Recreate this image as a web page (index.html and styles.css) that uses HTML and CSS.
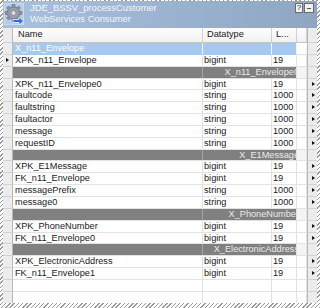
FILE: index.html
```html
<!DOCTYPE html>
<html lang="en">
<head>
    <meta charset="UTF-8">
    <title>JDE_BSSV_processCustomer</title>
    <link rel="stylesheet" href="styles.css">
</head>
<body>
    <div class="designer">
        <div class="titlebar">
            <div class="icon">
                <svg width="20" height="22" viewBox="0 0 20 22">
                    <rect x="0.5" y="0.5" width="19" height="21" fill="#b9cde6" stroke="#c9d8ec"/>
                    <g transform="translate(9.5 10)">
                        <circle r="6.2" fill="#8d93a3" stroke="#6a7183" stroke-width="0.8"/>
                        <g fill="#8d93a3" stroke="#6a7183" stroke-width="0.6">
                            <rect x="-1.5" y="-8.4" width="3" height="3"/>
                            <rect x="-1.5" y="5.4" width="3" height="3"/>
                            <rect x="-8.4" y="-1.5" width="3" height="3"/>
                            <rect x="5.4" y="-1.5" width="3" height="3"/>
                            <rect x="-1.5" y="-8.4" width="3" height="3" transform="rotate(45)"/>
                            <rect x="-1.5" y="5.4" width="3" height="3" transform="rotate(45)"/>
                            <rect x="-8.4" y="-1.5" width="3" height="3" transform="rotate(45)"/>
                            <rect x="5.4" y="-1.5" width="3" height="3" transform="rotate(45)"/>
                        </g>
                        <circle r="5.4" fill="#9aa0ae"/>
                        <circle r="2.6" fill="#d7dae2" stroke="#70778a" stroke-width="0.7"/>
                    </g>
                    <path d="M9 16.5h6v-2.5l4.5 4-4.5 4v-2.5h-6z" fill="#2d6fd8" stroke="#e8f0fb" stroke-width="0.8"/>
                </svg>
            </div>
            <div class="title">
                <div>JDE_BSSV_processCustomer</div>
                <div>WebServices Consumer</div>
            </div>
            <div class="title-buttons">
                <span class="tbtn help">?</span>
                <span class="tbtn min">&ndash;</span>
            </div>
        </div>

        <div class="grid">
            <div class="row header">
                <div class="gutter"></div>
                <div class="hcell name-col">Name</div>
                <div class="hcell">Datatype</div>
                <div class="hcell">L...</div>
                <div class="hcell"></div>
                <div class="gutter right"></div>
            </div>

            <div class="row selected">
                <div class="gutter"></div>
                <div class="cell name-col">X_n11_Envelope</div>
                <div class="cell"></div>
                <div class="cell"></div>
                <div class="cell blank"></div>
                <div class="gutter right"></div>
            </div>
            <div class="row">
                <div class="gutter current"></div>
                <div class="cell name-col">XPK_n11_Envelope</div>
                <div class="cell">bigint</div>
                <div class="cell">19</div>
                <div class="cell blank"></div>
                <div class="gutter right"></div>
            </div>
            <div class="row table-row">
                <div class="gutter"></div>
                <div class="band"><span>X_n11_Envelope0</span></div>
                <div class="cell blank"></div>
                <div class="gutter right"></div>
            </div>
            <div class="row">
                <div class="gutter"></div>
                <div class="cell name-col">XPK_n11_Envelope0</div>
                <div class="cell">bigint</div>
                <div class="cell">19</div>
                <div class="cell blank"></div>
                <div class="gutter right more"></div>
            </div>
            <div class="row">
                <div class="gutter"></div>
                <div class="cell name-col">faultcode</div>
                <div class="cell">string</div>
                <div class="cell">1000</div>
                <div class="cell blank"></div>
                <div class="gutter right more"></div>
            </div>
            <div class="row">
                <div class="gutter"></div>
                <div class="cell name-col">faultstring</div>
                <div class="cell">string</div>
                <div class="cell">1000</div>
                <div class="cell blank"></div>
                <div class="gutter right more"></div>
            </div>
            <div class="row">
                <div class="gutter"></div>
                <div class="cell name-col">faultactor</div>
                <div class="cell">string</div>
                <div class="cell">1000</div>
                <div class="cell blank"></div>
                <div class="gutter right more"></div>
            </div>
            <div class="row">
                <div class="gutter"></div>
                <div class="cell name-col">message</div>
                <div class="cell">string</div>
                <div class="cell">1000</div>
                <div class="cell blank"></div>
                <div class="gutter right more"></div>
            </div>
            <div class="row">
                <div class="gutter"></div>
                <div class="cell name-col">requestID</div>
                <div class="cell">string</div>
                <div class="cell">1000</div>
                <div class="cell blank"></div>
                <div class="gutter right more"></div>
            </div>
            <div class="row table-row">
                <div class="gutter"></div>
                <div class="band"><span>X_E1Message</span></div>
                <div class="cell blank"></div>
                <div class="gutter right"></div>
            </div>
            <div class="row">
                <div class="gutter"></div>
                <div class="cell name-col">XPK_E1Message</div>
                <div class="cell">bigint</div>
                <div class="cell">19</div>
                <div class="cell blank"></div>
                <div class="gutter right more"></div>
            </div>
            <div class="row">
                <div class="gutter"></div>
                <div class="cell name-col">FK_n11_Envelope</div>
                <div class="cell">bigint</div>
                <div class="cell">19</div>
                <div class="cell blank"></div>
                <div class="gutter right more"></div>
            </div>
            <div class="row">
                <div class="gutter"></div>
                <div class="cell name-col">messagePrefix</div>
                <div class="cell">string</div>
                <div class="cell">1000</div>
                <div class="cell blank"></div>
                <div class="gutter right more"></div>
            </div>
            <div class="row">
                <div class="gutter"></div>
                <div class="cell name-col">message0</div>
                <div class="cell">string</div>
                <div class="cell">1000</div>
                <div class="cell blank"></div>
                <div class="gutter right more"></div>
            </div>
            <div class="row table-row">
                <div class="gutter"></div>
                <div class="band"><span>X_PhoneNumber</span></div>
                <div class="cell blank"></div>
                <div class="gutter right"></div>
            </div>
            <div class="row">
                <div class="gutter"></div>
                <div class="cell name-col">XPK_PhoneNumber</div>
                <div class="cell">bigint</div>
                <div class="cell">19</div>
                <div class="cell blank"></div>
                <div class="gutter right more"></div>
            </div>
            <div class="row">
                <div class="gutter"></div>
                <div class="cell name-col">FK_n11_Envelope0</div>
                <div class="cell">bigint</div>
                <div class="cell">19</div>
                <div class="cell blank"></div>
                <div class="gutter right more"></div>
            </div>
            <div class="row table-row">
                <div class="gutter"></div>
                <div class="band"><span>X_ElectronicAddress</span></div>
                <div class="cell blank"></div>
                <div class="gutter right"></div>
            </div>
            <div class="row">
                <div class="gutter"></div>
                <div class="cell name-col">XPK_ElectronicAddress</div>
                <div class="cell">bigint</div>
                <div class="cell">19</div>
                <div class="cell blank"></div>
                <div class="gutter right more"></div>
            </div>
            <div class="row">
                <div class="gutter"></div>
                <div class="cell name-col">FK_n11_Envelope1</div>
                <div class="cell">bigint</div>
                <div class="cell">19</div>
                <div class="cell blank"></div>
                <div class="gutter right more"></div>
            </div>
            <div class="row">
                <div class="gutter"></div>
                <div class="cell name-col"></div>
                <div class="cell"></div>
                <div class="cell"></div>
                <div class="cell blank"></div>
                <div class="gutter right"></div>
            </div>
            <div class="row">
                <div class="gutter"></div>
                <div class="cell name-col"></div>
                <div class="cell"></div>
                <div class="cell"></div>
                <div class="cell blank"></div>
                <div class="gutter right"></div>
            </div>
        </div>
    </div>
</body>
</html>
```

FILE: styles.css
```css
body {
    margin: 0;
    font-family: 'Liberation Sans', Arial, sans-serif;
    background-color: #ffffff;
}
.designer {
    width: 320px;
    height: 308px;
    box-sizing: border-box;
    padding: 1px 3px 5px 3px;
    background: repeating-linear-gradient(-45deg, #9a9a9a 0 1px, #ffffff 1px 3px);
    display: flex;
    flex-direction: column;
    overflow: hidden;
}
.titlebar {
    height: 27px;
    flex-shrink: 0;
    display: flex;
    align-items: flex-start;
    background: linear-gradient(to right, #a9c1de, #8ea6c2);
    color: #f3f6fa;
}
.icon {
    margin: 2px 0 0 1px;
    height: 22px;
}
.title {
    margin: 1px 0 0 6px;
    font-size: 9.4px;
    line-height: 11px;
}
.title-buttons {
    margin: 2px 3px 0 auto;
    display: flex;
    gap: 1px;
}
.tbtn {
    height: 10px;
    box-sizing: border-box;
    border: 1px solid #6b6b6b;
    background-color: #f2f2f2;
    color: #222;
    font-size: 8px;
    line-height: 8px;
    text-align: center;
}
.help {
    width: 8px;
}
.min {
    width: 10px;
    font-weight: bold;
}
.grid {
    flex: 1;
    background-color: #ffffff;
    overflow: hidden;
}
.row {
    display: grid;
    grid-template-columns: 10px 190px 69px 25px 10px 10px;
    height: 11.85px;
    font-size: 9.2px;
    line-height: 11px;
    color: #1a1a1a;
}
.row.header {
    height: 15px;
    line-height: 13px;
}
.gutter {
    box-sizing: border-box;
    background-color: #ececec;
    border-right: 1px solid #b8b8b8;
    border-bottom: 1px solid #d2d2d2;
    position: relative;
}
.gutter.right {
    border-right: none;
    border-left: 1px solid #b8b8b8;
}
.gutter.current::after,
.gutter.more::after {
    content: '';
    position: absolute;
    left: 3px;
    top: 3px;
    border-left: 3px solid #111;
    border-top: 2.5px solid transparent;
    border-bottom: 2.5px solid transparent;
}
.gutter.more::after {
    left: 4px;
}
.hcell {
    box-sizing: border-box;
    padding-left: 4px;
    background: linear-gradient(#fdfdfd, #f1f1f1);
    border-right: 1px solid #d0d0d0;
    border-bottom: 1px solid #c4c4c4;
    white-space: nowrap;
    overflow: hidden;
}
.hcell.name-col {
    padding-left: 5px;
}
.cell {
    box-sizing: border-box;
    padding-left: 1px;
    border-right: 1px solid #e2e2e2;
    border-bottom: 1px solid #e2e2e2;
    white-space: nowrap;
    overflow: hidden;
}
.cell.name-col {
    padding-left: 2px;
}
.selected .cell {
    background-color: #a6c8f1;
    border-right-color: #f2f7fd;
    border-bottom-color: #a6c8f1;
    color: #ffffff;
}
.selected .cell.blank {
    background-color: #ffffff;
    border-bottom-color: #e2e2e2;
}
.band {
    grid-column: 2 / 5;
    box-sizing: border-box;
    background-color: #808080;
    background-image: linear-gradient(to right, transparent 189px, #a4a4a4 189px, #a4a4a4 190px, transparent 190px);
    border-right: 1px solid #e2e2e2;
    border-bottom: 1px solid #e2e2e2;
    display: flex;
    justify-content: flex-end;
    overflow: hidden;
    color: #ebebeb;
    white-space: nowrap;
}
.band span {
    margin-right: -3px;
}
.table-row .cell.blank {
    background-color: #f4f4f4;
}
```
